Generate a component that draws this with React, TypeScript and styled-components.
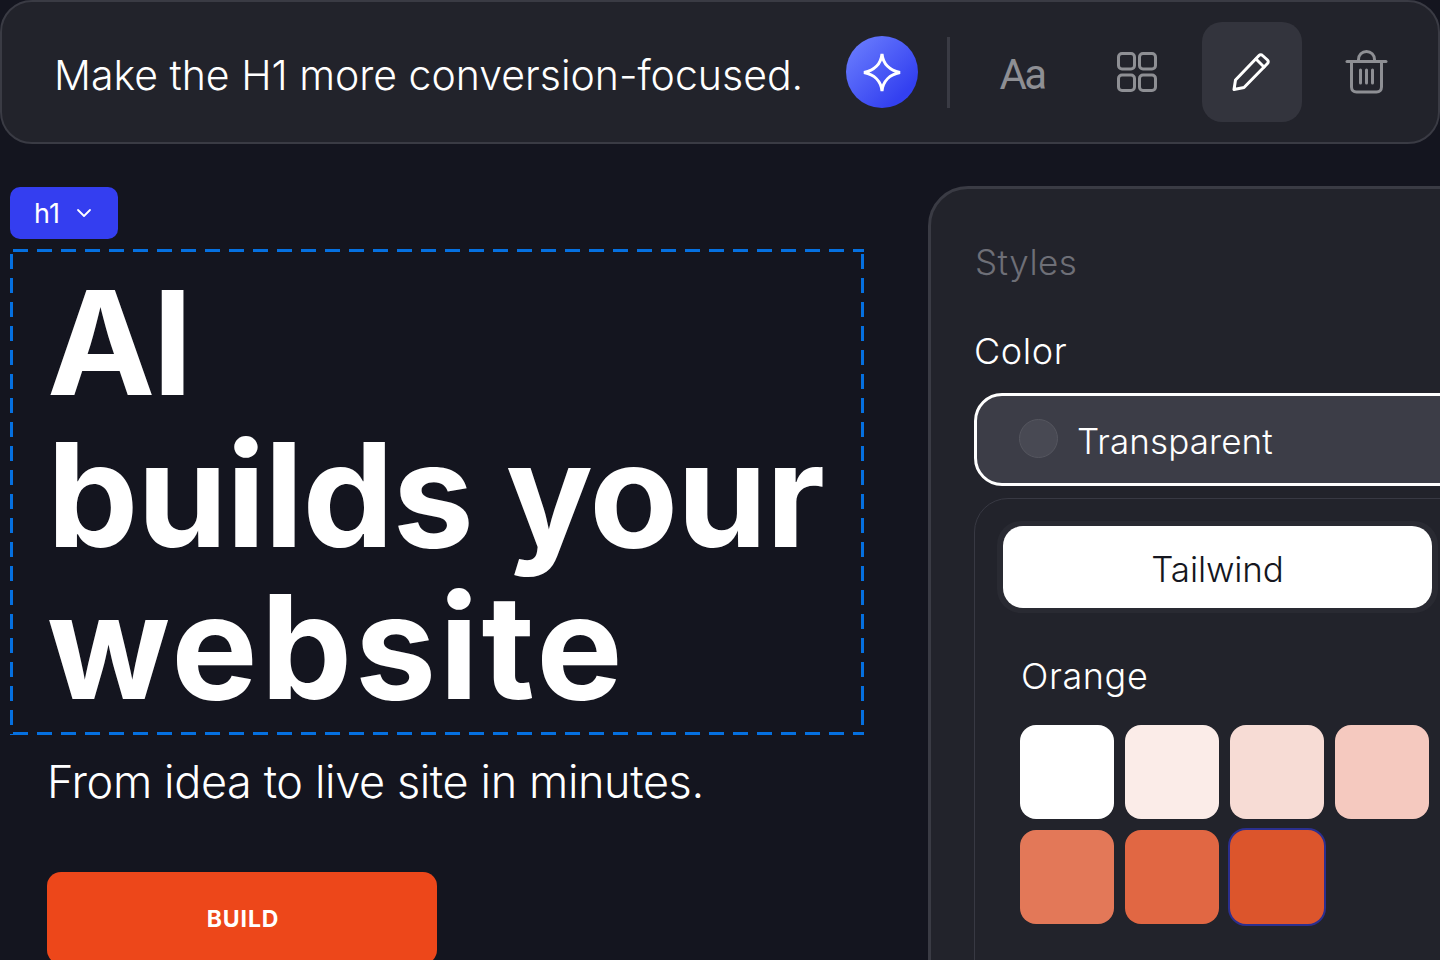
import React from "react";
import styled, { createGlobalStyle } from "styled-components";

const Global = createGlobalStyle`
  html, body { margin: 0; padding: 0; background: #14151f; }
  * { box-sizing: border-box; }
`;

const Page = styled.div`
  width: 1440px; height: 960px; overflow: hidden; background: #14151f;
  font-family: Inter, "Liberation Sans", sans-serif; color: #fff;
  display: flex; flex-direction: column;
`;
const Toolbar = styled.div`
  height: 144px; flex: none; display: flex; align-items: center;
  background: #22232b; border: 2px solid #3a3b44; border-radius: 32px;
  padding: 0 0 0 52px; margin-bottom: 42px;
`;
const Prompt = styled.div`
  font-size: 41px; font-weight: 300; letter-spacing: 0px; white-space: nowrap; width: 792px; padding-top: 6px;
`;
const AiButton = styled.button`
  width: 72px; height: 72px; border: 0; border-radius: 50%; padding: 0; flex: none;
  background: linear-gradient(135deg, #6f82ff 0%, #3340f0 80%);
  display: flex; align-items: center; justify-content: center;
`;
const Divider = styled.div`
  width: 3px; height: 71px; background: #3a3b44; margin: 0 52px 0 29px; flex: none;
`;
const IconSlot = styled.div<{ $active?: boolean }>`
  width: 100px; height: 100px; border-radius: 20px; flex: none;
  display: flex; align-items: center; justify-content: center;
  background: ${(p) => (p.$active ? "#33343d" : "transparent")};
  color: ${(p) => (p.$active ? "#fff" : "#8e8f94")};
  svg { overflow: visible; }
`;
const Tools = styled.div`
  display: flex; align-items: center; gap: 15px; margin-left: -30px;
`;
const AaLabel = styled.span`
  font-family: Roboto, sans-serif; font-size: 42px; letter-spacing: -2.6px; font-weight: 400; color: #8e8f94; padding-top: 4px;
`;
const Workspace = styled.div`
  display: flex; flex: 1; min-height: 0;
`;
const Canvas = styled.div`
  width: 928px; flex: none; padding: 1px 0 0 10px; display: flex; flex-direction: column; align-items: flex-start;
`;
const TagChip = styled.div`
  width: 108px; height: 52px; background: #343ef0; border-radius: 10px; display: flex; align-items: center; flex: none;
  padding-left: 24px; gap: 16px; font-size: 27px; margin-bottom: 10px; font-weight: 400;
`;
const Selection = styled.div`
  width: 854px; height: 486px; flex: none; padding: 18px 0 0 37px;
  background-image:
    repeating-linear-gradient(90deg, #0570e0 0 15px, transparent 15px 24px),
    repeating-linear-gradient(90deg, #0570e0 0 15px, transparent 15px 24px),
    repeating-linear-gradient(180deg, #0570e0 0 15px, transparent 15px 24px),
    repeating-linear-gradient(180deg, #0570e0 0 15px, transparent 15px 24px);
  background-size: 100% 3px, 100% 3px, 3px 100%, 3px 100%;
  background-position: 3px 0, 3px 100%, 0 5px, 100% 5px;
  background-repeat: no-repeat;
`;
const Heading = styled.h1`
  margin: 0; font-size: 145px; line-height: 152px; font-weight: 700; color: #fff;
`;
const HeadingLine = styled.span<{ $ls: number }>`
  display: block; white-space: nowrap; letter-spacing: ${(p) => p.$ls}px;
`;
const Sub = styled.p`
  margin: 20px 0 0 37px; font-size: 45px; line-height: 54px; font-weight: 300; letter-spacing: -0.38px; white-space: nowrap;
`;
const Cta = styled.button`
  margin: 63px 0 0 37px; width: 390px; height: 92px; flex: none; border: 0; border-radius: 14px; background: #ed471a;
  color: #fff; font-family: inherit; font-size: 23px; font-weight: 700; letter-spacing: 0.9px; padding: 2px 0 0 2px;
`;
const Panel = styled.aside`
  width: 640px; flex: none; height: 900px; background: #22232b; border: 3px solid #3a3b44; border-radius: 40px;
  padding: 51px 0 0 43px;
`;
const PanelTitle = styled.div`
  font-size: 35px; line-height: 44px; color: #6e6f77; font-weight: 300; margin-left: 1px; letter-spacing: 0.5px;
`;
const FieldLabel = styled.div`
  font-size: 36px; line-height: 44px; color: #fff; margin: 45px 0 20px 0; font-weight: 300; letter-spacing: 0.6px;
`;
const ColorField = styled.div`
  width: 560px; height: 93px; background: #3c3d47; border: 3px solid #fff; border-radius: 28px;
  display: flex; align-items: center; gap: 19px; padding: 0 0 2px 42px; font-size: 35px; font-weight: 300;
`;
const FieldText = styled.span`
  padding-top: 4px; letter-spacing: 0.1px;
`;
const Dot = styled.div`
  width: 39px; height: 39px; border-radius: 50%; background: #484953; border: 1px solid #55565f; flex: none;
`;
const InnerCard = styled.div`
  margin-top: 12px; width: 560px; height: 500px; border: 1px solid #383943; border-radius: 34px; padding: 22px 0 0 22px;
`;
const SegTrack = styled.div`
  width: 441px; height: 92px; background: #292a32; border-radius: 24px; padding: 5px 6px;
`;
const SegActive = styled.div`
  height: 82px; background: #fff; border-radius: 20px; color: #151620; font-size: 35px; font-weight: 300; padding-top: 4px; letter-spacing: -0.15px;
  display: flex; align-items: center; justify-content: center;
`;
const GroupName = styled.div`
  font-size: 36px; line-height: 44px; margin: 41px 0 27px 24px; font-weight: 300; letter-spacing: 0.6px;
`;
const Swatches = styled.div`
  display: grid; grid-template-columns: repeat(4, 94px); gap: 11px; margin-left: 23px;
`;
const Swatch = styled.div<{ $c: string; $sel?: boolean }>`
  height: 94px; border-radius: 16px; background: ${(p) => p.$c};
  ${(p) => (p.$sel ? "box-shadow: 0 0 0 2px #2b2f8f;" : "")}
`;

const colors = ["#ffffff", "#fbece8", "#f7dcd5", "#f5c9bf", "#e37858", "#e16743", "#dc552c"];

export default function App() {
  return (
    <Page>
      <Global />
      <Toolbar>
        <Prompt>Make the H1 more conversion-focused.</Prompt>
        <AiButton aria-label="AI">
          <svg width="40" height="41" viewBox="0 0 40 41" fill="none" stroke="#fff" strokeWidth="3" strokeLinejoin="miter">
            <path d="M20 2C21 12 28 18.5 38 20.5C28 22.5 21 29 20 39C19 29 12 22.5 2 20.5C12 18.5 19 12 20 2Z" />
          </svg>
        </AiButton>
        <Divider />
        <Tools>
          <IconSlot><AaLabel>Aa</AaLabel></IconSlot>
          <IconSlot>
            <svg width="40" height="40" viewBox="0 0 40 40" fill="none" stroke="currentColor" strokeWidth="3">
              <rect x="1.5" y="1.5" width="16" height="15.5" rx="3.5" />
              <rect x="22.5" y="1.5" width="16" height="15.5" rx="3.5" />
              <rect x="1.5" y="23" width="16" height="15.5" rx="3.5" />
              <rect x="22.5" y="23" width="16" height="15.5" rx="3.5" />
            </svg>
          </IconSlot>
          <IconSlot $active>
            <svg width="38" height="38" viewBox="1 0 38 38" fill="none" stroke="currentColor" strokeWidth="3" strokeLinejoin="round" strokeLinecap="round">
              <path d="M2 36.5L3.5 27L27 2.5C28 1.5 29.5 1.5 30.5 2.5L35.5 7C36.5 8 36.5 9.5 35.5 10.5L12 34.5Z" />
              <path d="M24 6L32 14" />
            </svg>
          </IconSlot>
          <IconSlot>
            <svg width="41" height="44" viewBox="1 0 41 44" fill="none" stroke="currentColor" strokeWidth="3" strokeLinecap="round">
              <path d="M1 11.5H40" />
              <path d="M12.5 11V9.5C12.5 5 16 1.5 20.5 1.5C25 1.5 28.5 5 28.5 9.5V11" />
              <path d="M5.5 11.5V37C5.5 40 7.5 42 10.5 42H30.5C33.5 42 35.5 40 35.5 37V11.5" />
              <path d="M14.5 20V33M20.5 20V33M26.5 20V33" />
            </svg>
          </IconSlot>
        </Tools>
      </Toolbar>
      <Workspace>
        <Canvas>
          <TagChip>
            h1
            <svg width="16" height="10" viewBox="0 0 16 10" fill="none" stroke="#fff" strokeWidth="1.8" strokeLinecap="round" strokeLinejoin="round">
              <path d="M2 2L8 8L14 2" />
            </svg>
          </TagChip>
          <Selection>
            <Heading>
              <HeadingLine $ls={-3}>AI</HeadingLine>
              <HeadingLine $ls={-1.2}>builds your</HeadingLine>
              <HeadingLine $ls={3}>website</HeadingLine>
            </Heading>
          </Selection>
          <Sub>From idea to live site in minutes.</Sub>
          <Cta>BUILD</Cta>
        </Canvas>
        <Panel>
          <PanelTitle>Styles</PanelTitle>
          <FieldLabel>Color</FieldLabel>
          <ColorField><Dot /><FieldText>Transparent</FieldText></ColorField>
          <InnerCard>
            <SegTrack><SegActive>Tailwind</SegActive></SegTrack>
            <GroupName>Orange</GroupName>
            <Swatches>
              {colors.map((c, i) => <Swatch key={c} $c={c} $sel={i === 6} />)}
            </Swatches>
          </InnerCard>
        </Panel>
      </Workspace>
    </Page>
  );
}
